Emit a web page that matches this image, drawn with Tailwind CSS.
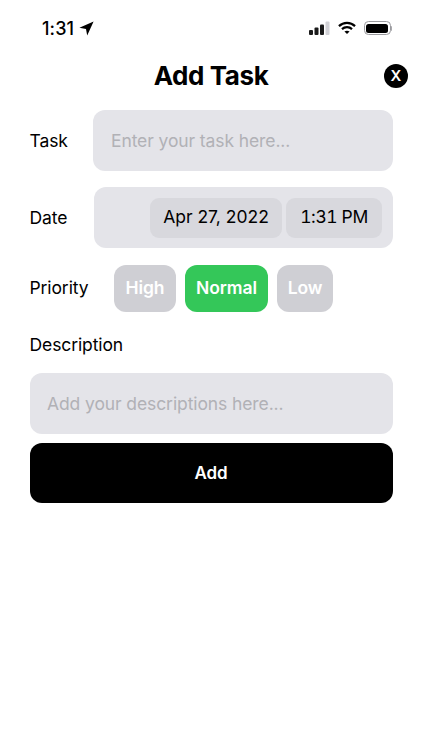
<!DOCTYPE html>
<html lang="en">
<head>
    <meta charset="UTF-8">
    <meta name="viewport" content="width=device-width, initial-scale=1.0">
    <title>Add Task</title>
    <script src="https://cdn.jsdelivr.net/npm/@tailwindcss/browser@4"></script>
</head>
<body class="bg-white font-['Inter','Roboto',sans-serif] text-black">
    <div class="w-[422px] h-[750px] overflow-hidden">
        <!-- Status bar -->
        <div class="h-[56px] pt-[18px] pl-[42px] pr-[15px] flex items-start justify-between">
            <div class="flex items-center h-[20px] gap-[5px] pt-[1px]">
                <span class="text-[18px] font-medium leading-[20px] tracking-[0.1px]">1:31</span>
                <svg class="w-[15px] h-[15px]" viewBox="0 0 15 15"><path d="M14.6 0.4 L0.4 6.8 L7 8 L8.2 14.6 Z" fill="#000"/></svg>
            </div>
            <div class="flex items-center h-[20px] gap-[8px] pr-[15px]">
                <svg class="w-[21px] h-[14px]" viewBox="0 0 21 14">
                    <rect x="0" y="9" width="4" height="5" rx="1" fill="#1a1a1a"/>
                    <rect x="5.5" y="6.5" width="4" height="7.5" rx="1" fill="#1a1a1a"/>
                    <rect x="11" y="3.5" width="4" height="10.5" rx="1" fill="#1a1a1a"/>
                    <rect x="16.5" y="0.5" width="4" height="13.5" rx="1" fill="#d1d1d6"/>
                </svg>
                <svg class="w-[18px] h-[14px]" viewBox="0 0 19 14" fill="none" stroke="#000" stroke-width="2.3">
                    <path d="M1 5 C5.8 0.4 13.2 0.4 18 5"/>
                    <path d="M4.2 8.2 C7.2 5.4 11.8 5.4 14.8 8.2"/>
                    <path d="M9.5 13.4 L6.8 10.8 C8.4 9.6 10.6 9.6 12.2 10.8 Z" fill="#000" stroke="none"/>
                </svg>
                <div class="flex items-center">
                    <div class="w-[27px] h-[14px] rounded-[4.5px] border border-[#9a9a9e] p-[1.5px]">
                        <div class="w-full h-full bg-black rounded-[2.5px]"></div>
                    </div>
                    <div class="w-[1.5px] h-[5px] bg-[#a8a8ac] rounded-r-sm"></div>
                </div>
            </div>
        </div>

        <!-- Title -->
        <div class="relative h-[38px] flex items-center justify-center">
            <h1 class="text-[26px] font-bold tracking-[-0.4px] leading-[38px] pt-[1px]">Add Task</h1>
            <div class="absolute right-[14px] top-[8px] w-[24px] h-[24px] rounded-full bg-black text-white flex items-center justify-center text-[15px] font-semibold">X</div>
        </div>

        <!-- Form -->
        <div class="px-[29.5px] pt-[16px] text-[17.5px] tracking-[-0.1px]">
            <div class="flex items-center h-[61px]">
                <span class="w-[63.5px] pt-[1px]">Task</span>
                <div class="flex-1 h-full bg-[#e4e4e9] rounded-[12px] flex items-center pl-[18px] pt-[1px] text-[#b1b1b6]">Enter your task here...</div>
            </div>

            <div class="flex items-center h-[61px] mt-[16px]">
                <span class="w-[64.5px] pt-[1px]">Date</span>
                <div class="flex-1 h-full bg-[#e4e4e9] rounded-[12px] flex items-center justify-end gap-[4px] pr-[10.5px] tracking-normal">
                    <div class="w-[132px] h-[40px] rounded-[9px] bg-[#d8d8dd] flex items-center justify-center">Apr 27, 2022</div>
                    <div class="w-[96px] h-[40px] rounded-[9px] bg-[#d8d8dd] flex items-center justify-center tabular-nums tracking-[-0.4px]">1:31 PM</div>
                </div>
            </div>

            <div class="flex items-center h-[47px] mt-[17px]">
                <span class="w-[84.5px]">Priority</span>
                <div class="flex gap-[9px] font-semibold text-white">
                    <div class="w-[62px] h-[47px] rounded-[12px] bg-[#cfcfd4] flex items-center justify-center">High</div>
                    <div class="w-[83px] h-[47px] rounded-[12px] bg-[#34c759] flex items-center justify-center">Normal</div>
                    <div class="w-[56px] h-[47px] rounded-[12px] bg-[#cfcfd4] flex items-center justify-center">Low</div>
                </div>
            </div>

            <div class="leading-[24px] mt-[21px]">Description</div>

            <div class="h-[61px] mt-[16px] bg-[#e4e4e9] rounded-[12px] flex items-center pl-[17.5px] pt-[2px] text-[#b1b1b6]">Add your descriptions here...</div>

            <div class="h-[60px] mt-[9px] bg-black rounded-[12px] flex items-center justify-center text-white text-[17px] font-semibold pt-[1px]">Add</div>
        </div>
    </div>
</body>
</html>
